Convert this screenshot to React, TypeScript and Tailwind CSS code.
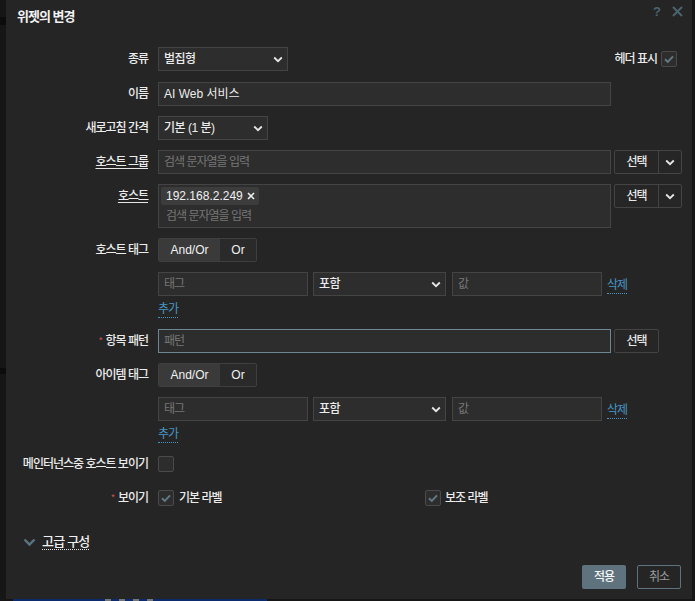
import type { ReactNode } from "react"

const ko = "font-['Liberation_Sans','Noto_Sans_CJK_KR',sans-serif]"

function Chevron({ className = "" }: { className?: string }) {
  return (
    <svg width="10" height="7" viewBox="0 0 10 7" className={className}>
      <path d="M1.2 1.5 L5 5.2 L8.8 1.5" fill="none" stroke="currentColor" strokeWidth="1.8" />
    </svg>
  )
}

function Label({ children, required, underline }: { children: ReactNode; required?: boolean; underline?: boolean }) {
  return (
    <div className="flex w-[142px] shrink-0 items-center justify-end text-[12px] font-medium tracking-[-1px] text-[#ececec]">
      {required && <span className="mr-[4px] text-[9px] text-[#d9534f]">*</span>}
      <span className={underline ? "underline decoration-[#e6e6e6] underline-offset-[2px]" : ""}>{children}</span>
    </div>
  )
}

function Row({ label, required, underline, className = "", children }: { label?: ReactNode; required?: boolean; underline?: boolean; className?: string; children: ReactNode }) {
  return (
    <div className={`flex items-center gap-[10px] ${className}`}>
      <Label required={required} underline={underline}>{label}</Label>
      {children}
    </div>
  )
}

function Input({ value, placeholder, width = "w-[453px]", focused }: { value?: string; placeholder?: string; width?: string; focused?: boolean }) {
  return (
    <div
      className={`flex h-[24px] ${width} shrink-0 items-center border bg-[#2d2d2d] pl-[5px] text-[12px] ${
        focused ? "border-[#6d8794]" : "border-[#444444]"
      }`}
    >
      {value ? <span className="text-[#ececec]">{value}</span> : <span className="tracking-[-1px] text-[#767676]">{placeholder}</span>}
    </div>
  )
}

function Select({ value, width }: { value: string; width: string }) {
  return (
    <div className={`flex h-[24px] ${width} shrink-0 items-center justify-between border border-[#444444] bg-[#2d2d2d] pl-[5px] pr-[4px] text-[12px] text-[#ececec]`}>
      <span className="font-medium tracking-[-0.5px]">{value}</span>
      <Chevron className="text-[#e6e6e6]" />
    </div>
  )
}

function PickButton({ dropdown }: { dropdown?: boolean }) {
  return (
    <div className="flex h-[24px] shrink-0 self-start rounded-[2px] border border-[#444444] bg-[#262626] text-[12px] text-[#e6e6e6]">
      <div className="flex w-[43px] items-center justify-center font-medium tracking-[-1px]">선택</div>
      {dropdown && (
        <div className="flex w-[23px] items-center justify-center border-l border-[#444444]">
          <Chevron />
        </div>
      )}
    </div>
  )
}

function Checkbox({ checked }: { checked?: boolean }) {
  return (
    <div className="flex h-[16px] w-[16px] shrink-0 items-center justify-center rounded-[2px] border border-[#4a4a4a] bg-[#2d2d2d]">
      {checked && (
        <svg width="12" height="12" viewBox="0 0 12 12">
          <path d="M2 6.3 L4.8 9 L10 3.3" fill="none" stroke="#627a86" strokeWidth="1.9" />
        </svg>
      )}
    </div>
  )
}

function Segmented() {
  return (
    <div className="flex h-[24px] overflow-hidden rounded-[2px] border border-[#3f3f3f] text-[12px] font-medium text-[#f0f0f0]">
      <div className="flex w-[61px] items-center justify-center bg-[#3a3a3a]">And/Or</div>
      <div className="flex w-[36px] items-center justify-center bg-[#2a2a2a]">Or</div>
    </div>
  )
}

function LinkText({ children }: { children: ReactNode }) {
  return (
    <span className="border-b border-dotted border-[#4796c4] pb-[1px] text-[12px] leading-[13px] tracking-[-1px] text-[#4796c4]">{children}</span>
  )
}

function TagRow({ className = "" }: { className?: string }) {
  return (
    <Row className={className}>
      <div className="flex items-center">
        <Input placeholder="태그" width="w-[150px]" />
        <div className="ml-[5px]">
          <Select value="포함" width="w-[133px]" />
        </div>
        <div className="ml-[6px]">
          <Input placeholder="값" width="w-[150px]" />
        </div>
        <div className="ml-[5px]">
          <LinkText>삭제</LinkText>
        </div>
      </div>
    </Row>
  )
}

export default function App() {
  return (
    <div className={`flex h-[601px] w-[695px] overflow-hidden bg-[#161616] ${ko}`}>
      <div className="flex w-[6px] shrink-0 flex-col">
        <div className="mt-[17px] h-[8px] bg-[#0c0c0c]" />
        <div className="mt-[343px] h-[6px] bg-[#0c0c0c]" />
      </div>

      <div className="flex w-[686px] shrink-0 flex-col">
        <div className="flex h-[599px] flex-col bg-[#252525]">
          {/* header */}
          <div className="flex h-[32px] items-start justify-between pl-[11px] pr-[9px]">
            <h1 className="mt-[7px] text-[13px] font-bold tracking-[-1px] text-[#f2f2f2]">위젯의 변경</h1>
            <div className="mt-[2px] flex items-center gap-[11px] text-[#4b6371]">
              <span className="text-[13px] font-bold">?</span>
              <svg width="11" height="11" viewBox="0 0 11 11">
                <path d="M1 1 L10 10 M10 1 L1 10" stroke="currentColor" strokeWidth="2" />
              </svg>
            </div>
          </div>

          {/* form */}
          <div className="flex flex-col pr-[11px] pt-[15px]">
            <Row label="종류">
              <Select value="벌집형" width="w-[130px]" />
              <div className="ml-auto mr-[4px] flex items-center gap-[4px]">
                <span className="text-[12px] font-medium tracking-[-1px] text-[#ececec]">헤더 표시</span>
                <Checkbox checked />
              </div>
            </Row>

            <Row label="이름" className="mt-[11px]">
              <Input value="AI Web 서비스" />
            </Row>

            <Row label="새로고침 간격" className="mt-[10px]">
              <Select value="기본 (1 분)" width="w-[110px]" />
            </Row>

            <Row label="호스트 그룹" underline className="mt-[10px]">
              <Input placeholder="검색 문자열을 입력" />
              <div className="ml-[-7px]">
                <PickButton dropdown />
              </div>
            </Row>

            <div className="mt-[10px] flex gap-[10px]">
              <div className="flex h-[24px] items-center">
                <Label underline>호스트</Label>
              </div>
              <div className="flex h-[44px] w-[453px] shrink-0 flex-col border border-[#444444] bg-[#2d2d2d] pl-[2px] pt-[2px]">
                <div className="flex h-[18px] w-[98px] items-center gap-[4px] rounded-[2px] bg-[#3c3c3c] pl-[5px] text-[12px] text-[#f0f0f0]">
                  <span>192.168.2.249</span>
                  <svg width="8" height="8" viewBox="0 0 8 8">
                    <path d="M1 1 L7 7 M7 1 L1 7" stroke="#f0f0f0" strokeWidth="1.6" />
                  </svg>
                </div>
                <span className="mt-[2px] pl-[5px] text-[12px] tracking-[-1px] text-[#767676]">검색 문자열을 입력</span>
              </div>
              <div className="ml-[-7px]">
                <PickButton dropdown />
              </div>
            </div>

            <Row label="호스트 태그" className="mt-[10px]">
              <Segmented />
            </Row>

            <TagRow className="mt-[10px]" />

            <Row className="mt-[7px] h-[15px]">
              <LinkText>추가</LinkText>
            </Row>

            <Row label="항목 패턴" required className="mt-[11px]">
              <Input placeholder="패턴" focused />
              <div className="ml-[-7px]">
                <PickButton />
              </div>
            </Row>

            <Row label="아이템 태그" className="mt-[10px]">
              <Segmented />
            </Row>

            <TagRow className="mt-[10px]" />

            <Row className="mt-[7px] h-[15px]">
              <LinkText>추가</LinkText>
            </Row>

            <Row label="메인터넌스중 호스트 보이기" className="mt-[13px] h-[16px]">
              <Checkbox />
            </Row>

            <Row label="보이기" required className="mt-[18px] h-[16px]">
              <div className="flex w-[257px] items-center gap-[5px]">
                <Checkbox checked />
                <span className="text-[12px] font-medium tracking-[-1px] text-[#ececec]">기본 라벨</span>
              </div>
              <div className="flex items-center gap-[4px]">
                <Checkbox checked />
                <span className="text-[12px] font-medium tracking-[-1px] text-[#ececec]">보조 라벨</span>
              </div>
            </Row>
          </div>

          {/* advanced section toggle */}
          <div className="mt-[26px] flex h-[20px] items-center gap-[6px] pl-[17px]">
            <svg width="13" height="9" viewBox="0 0 13 9">
              <path d="M1.5 1.5 L6.5 6.5 L11.5 1.5" fill="none" stroke="#5b7482" strokeWidth="2.4" />
            </svg>
            <span className="border-b border-dotted border-[#e6e6e6] text-[13px] font-medium leading-[15px] tracking-[-0.8px] text-[#f0f0f0]">고급 구성</span>
          </div>

          {/* footer */}
          <div className="mt-auto flex justify-end gap-[11px] pb-[10px] pr-[11px]">
            <button className="h-[24px] w-[44px] rounded-[2px] bg-[#5e737e] text-[12px] font-medium tracking-[-1px] text-[#f5f5f5]">적용</button>
            <button className="h-[24px] w-[44px] rounded-[2px] border border-[#5e737e] text-[12px] tracking-[-1px] text-[#9a9a9a]">취소</button>
          </div>
        </div>
        <div className="ml-[7px] flex h-[2px] w-[254px] bg-[#0b2b6e]">
          <div className="ml-[92px] w-[6px] bg-[#777777]" />
          <div className="ml-[8px] w-[6px] bg-[#777777]" />
          <div className="ml-[8px] w-[6px] bg-[#777777]" />
          <div className="ml-[8px] w-[6px] bg-[#777777]" />
        </div>
      </div>
    </div>
  )
}
